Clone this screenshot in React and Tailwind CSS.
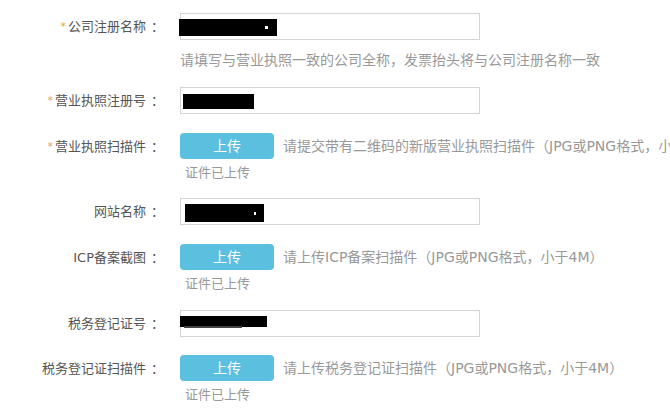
import React from "react";

const FONT = { fontFamily: '"DejaVu Sans", "Noto Sans CJK SC", sans-serif' };

function Label({ required, children }) {
  return (
    <div className="w-[164px] shrink-0 h-[27px] flex items-center justify-end text-[13px] text-[#555] whitespace-nowrap">
      {required && <span className="text-[#e0a640] text-[11px] mr-[2px] leading-none">*</span>}
      <span>{children}</span>
      <span className="ml-[5px]">：</span>
    </div>
  );
}

function TextInput({ mask }) {
  return (
    <div className="relative w-[300px] h-[27px] border border-[#d4d4d4] bg-white">
      {mask}
    </div>
  );
}

function Upload({ hint }) {
  return (
    <div>
      <div className="flex items-center">
        <button className="w-[94px] h-[26px] shrink-0 rounded-[4px] bg-[#5bbfdf] text-white text-[14px] leading-none">
          上传
        </button>
        <span className="ml-[9px] text-[14px] text-[#999] whitespace-nowrap">{hint}</span>
      </div>
      <div className="ml-[5px] mt-[4px] h-[20px] leading-[20px] text-[13px] text-[#999]">证件已上传</div>
    </div>
  );
}

export default function App() {
  return (
    <div className="w-[670px] h-[415px] bg-white overflow-hidden" style={FONT}>
      <div className="pt-[13px]">
        {/* 公司注册名称 */}
        <div className="flex gap-[16px]">
          <Label required>公司注册名称</Label>
          <div>
            <TextInput
              mask={
                <div className="absolute left-[-2px] top-[5px] w-[98px] h-[17px] bg-black">
                  <div className="absolute right-[9px] top-[7px] w-[3px] h-[3px] bg-white" />
                </div>
              }
            />
            <div className="mt-[10px] h-[20px] leading-[20px] text-[14px] text-[#999] whitespace-nowrap">
              请填写与营业执照一致的公司全称，发票抬头将与公司注册名称一致
            </div>
          </div>
        </div>

        {/* 营业执照注册号 */}
        <div className="flex gap-[16px] mt-[17px]">
          <Label required>营业执照注册号</Label>
          <TextInput mask={<div className="absolute left-[2px] top-[6px] w-[71px] h-[15px] bg-black" />} />
        </div>

        {/* 营业执照扫描件 */}
        <div className="flex gap-[16px] mt-[19px]">
          <Label required>营业执照扫描件</Label>
          <Upload hint="请提交带有二维码的新版营业执照扫描件（JPG或PNG格式，小于4M）" />
        </div>

        {/* 网站名称 */}
        <div className="flex gap-[16px] mt-[15px]">
          <Label>网站名称</Label>
          <TextInput
            mask={
              <div className="absolute left-[4px] top-[5px] w-[79px] h-[18px] bg-black">
                <div className="absolute right-[8px] top-[8px] w-[2px] h-[3px] bg-white" />
              </div>
            }
          />
        </div>

        {/* ICP备案截图 */}
        <div className="flex gap-[16px] mt-[19px]">
          <Label>ICP备案截图</Label>
          <Upload hint="请上传ICP备案扫描件（JPG或PNG格式，小于4M）" />
        </div>

        {/* 税务登记证号 */}
        <div className="flex gap-[16px] mt-[16px]">
          <Label>税务登记证号</Label>
          <TextInput
            mask={
              <>
                <div className="absolute left-[-1px] top-[5px] w-[87px] h-[11px] bg-black" />
                <div className="absolute left-[3px] top-[15px] w-[58px] h-[2px] bg-[#444]" />
              </>
            }
          />
        </div>

        {/* 税务登记证扫描件 */}
        <div className="flex gap-[16px] mt-[18px]">
          <Label>税务登记证扫描件</Label>
          <Upload hint="请上传税务登记证扫描件（JPG或PNG格式，小于4M）" />
        </div>
      </div>
    </div>
  );
}
